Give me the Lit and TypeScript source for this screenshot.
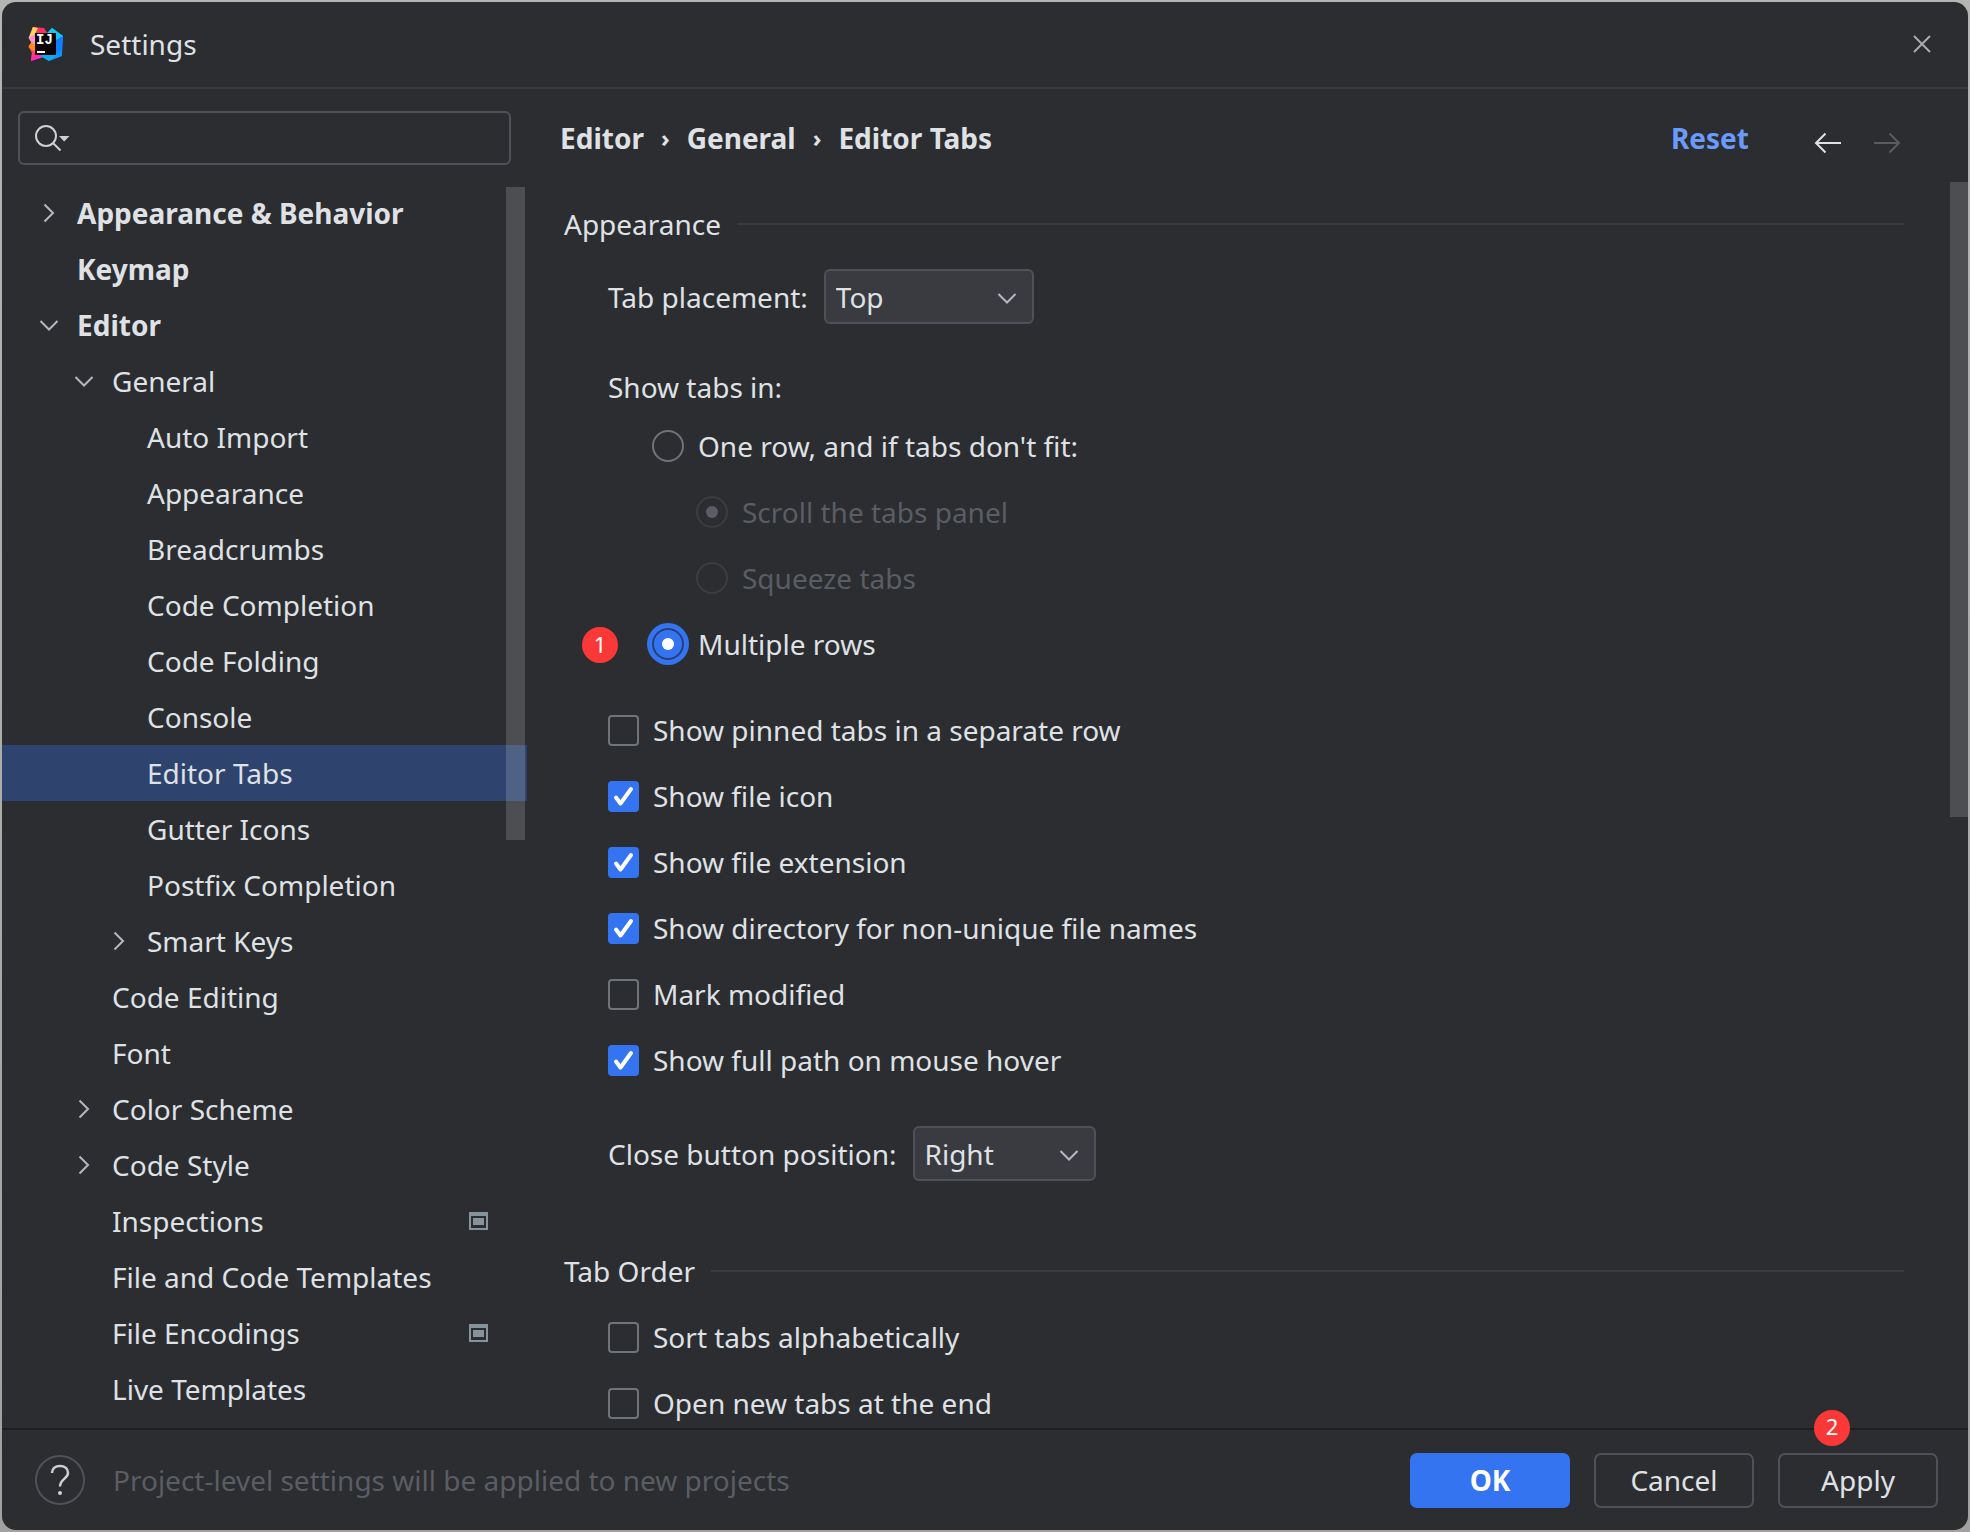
import { LitElement, html, css, svg, nothing } from "lit";
import { customElement, property, state } from "lit/decorators.js";
import { classMap } from "lit/directives/class-map.js";

interface TreeRow {
  label: string;
  depth: number;
  toggle?: "open" | "closed";
  bold?: boolean;
  projectLevel?: boolean;
}

const TREE: TreeRow[] = [
  { label: "Appearance & Behavior", depth: 0, toggle: "closed", bold: true },
  { label: "Keymap", depth: 0, bold: true },
  { label: "Editor", depth: 0, toggle: "open", bold: true },
  { label: "General", depth: 1, toggle: "open" },
  { label: "Auto Import", depth: 2 },
  { label: "Appearance", depth: 2 },
  { label: "Breadcrumbs", depth: 2 },
  { label: "Code Completion", depth: 2 },
  { label: "Code Folding", depth: 2 },
  { label: "Console", depth: 2 },
  { label: "Editor Tabs", depth: 2 },
  { label: "Gutter Icons", depth: 2 },
  { label: "Postfix Completion", depth: 2 },
  { label: "Smart Keys", depth: 2, toggle: "closed" },
  { label: "Code Editing", depth: 1 },
  { label: "Font", depth: 1 },
  { label: "Color Scheme", depth: 1, toggle: "closed" },
  { label: "Code Style", depth: 1, toggle: "closed" },
  { label: "Inspections", depth: 1, projectLevel: true },
  { label: "File and Code Templates", depth: 1 },
  { label: "File Encodings", depth: 1, projectLevel: true },
  { label: "Live Templates", depth: 1 },
];

const chevronRight = html`<svg class="chevron" viewBox="0 0 20 20" width="20" height="20" aria-hidden="true">
  <path d="M5.5 1.5 14 10 5.5 18.5" fill="none" stroke="currentColor" stroke-width="2" />
</svg>`;

const chevronDown = html`<svg class="chevron" viewBox="0 0 20 20" width="20" height="20" aria-hidden="true">
  <path d="M1.5 6 10 14.5 18.5 6" fill="none" stroke="currentColor" stroke-width="2" />
</svg>`;

const projectIcon = html`<svg class="project" viewBox="0 0 19 18" width="19" height="18" aria-label="Project level" role="img">
  <path fill="#87939a" fill-rule="evenodd" d="M0 0H19V18H0ZM2 4V16H17V4Z" />
  <rect x="4" y="6" width="11" height="7" fill="#87939a" />
</svg>`;

const base = css`
  *,
  *::before,
  *::after {
    box-sizing: border-box;
  }
  button,
  input,
  select {
    font: inherit;
    color: inherit;
    margin: 0;
  }
  svg {
    display: block;
    flex: none;
  }
`;

@customElement("app-logo")
export class AppLogo extends LitElement {
  static styles = css`
    :host {
      display: block;
    }
    svg {
      display: block;
    }
    text {
      font: bold 14px "Liberation Mono", monospace;
      fill: #fff;
    }
  `;

  render() {
    return html`<svg viewBox="0 0 36 36" width="36" height="36" role="img" aria-label="IntelliJ IDEA">
      <defs>
        <linearGradient id="warm" x1="0" y1="0" x2="0" y2="1">
          <stop offset="0" stop-color="#fdd35c" />
          <stop offset="0.35" stop-color="#ff8ec6" />
          <stop offset="0.55" stop-color="#ff9a1f" />
          <stop offset="0.8" stop-color="#ff2e6c" />
          <stop offset="1" stop-color="#f51fae" />
        </linearGradient>
        <linearGradient id="cool" x1="0" y1="0" x2="0" y2="1">
          <stop offset="0" stop-color="#12d3f5" />
          <stop offset="0.5" stop-color="#0f7bff" />
          <stop offset="1" stop-color="#12a4f4" />
        </linearGradient>
        <linearGradient id="core" x1="1" y1="0" x2="0" y2="1">
          <stop offset="0" stop-color="#000" />
          <stop offset="1" stop-color="#1a0207" />
        </linearGradient>
      </defs>
      ${svg`
        <path d="M5 1 0.5 12 3.5 16 0.5 21 4 26 3 35 14 30 20 18 12 6Z" fill="url(#warm)" />
        <path d="M5 1 16 2 20 8 7 9 3 6Z" fill="#ff315c" />
        <path d="M5 1 10 2 6 10 1 12Z" fill="#ffd45c" />
        <path d="M0.5 20 4 16 8 24 6 28Z" fill="#ff8a14" />
        <path d="M1 12 7 8 7 18 3 16Z" fill="#ff8fd2" />
        <path d="M2 23 8 26 8 30 3 35 4 27Z" fill="#ff3f6e" />
        <path d="M5 30 12 28 16 31 3 35Z" fill="#ff2bb4" />
        <path d="M24 2 35 10 34 30 21 35 12 30 20 18 19 8Z" fill="url(#cool)" />
        <path d="M24 2 35 10 29 14 18 8Z" fill="#16c5f7" />
        <path d="M28 14 35 10 34 20 28 28Z" fill="#0f7fff" />
        <path d="M12 29 29 28 21 35Z" fill="#10a9f2" />
      `}
      <rect x="7" y="7" width="21" height="22" fill="url(#core)" />
      <text x="8" y="18">IJ</text>
      <rect x="9" y="25" width="8" height="2" fill="#fff" />
    </svg>`;
  }
}

@customElement("settings-tree")
export class SettingsTree extends LitElement {
  @state() private selected = "Editor Tabs";

  static styles = [
    base,
    css`
      :host {
        display: block;
        position: relative;
        overflow: hidden;
      }
      .row {
        display: flex;
        align-items: center;
        height: 56px;
        padding-right: 39px;
        color: inherit;
        text-decoration: none;
        white-space: nowrap;
      }
      .row.selected {
        background: #2e436e;
      }
      .row.bold {
        font-weight: 700;
      }
      .indent-0 {
        padding-left: 37px;
      }
      .indent-1 {
        padding-left: 72px;
      }
      .indent-2 {
        padding-left: 107px;
      }
      .toggle {
        flex: none;
        width: 38px;
        color: #b4b8bf;
      }
      .label {
        flex: 1;
      }
      .thumb {
        position: absolute;
        top: 2px;
        right: 2px;
        width: 19px;
        height: 653px;
        background: rgba(255, 255, 255, 0.16);
      }
    `,
  ];

  private select(e: Event, label: string) {
    e.preventDefault();
    this.selected = label;
  }

  render() {
    return html`<nav aria-label="Settings categories">
        ${TREE.map(
          (r) => html`<a
            href="#"
            class=${classMap({
              row: true,
              [`indent-${r.depth}`]: true,
              bold: !!r.bold,
              selected: r.label === this.selected,
            })}
            @click=${(e: Event) => this.select(e, r.label)}
          >
            <span class="toggle"
              >${r.toggle === "open" ? chevronDown : r.toggle === "closed" ? chevronRight : nothing}</span
            >
            <span class="label">${r.label}</span>
            ${r.projectLevel ? projectIcon : nothing}
          </a>`
        )}
      </nav>
      <div class="thumb"></div>`;
  }
}

@customElement("choice-item")
export class ChoiceItem extends LitElement {
  @property() kind: "radio" | "checkbox" = "checkbox";
  @property() label = "";
  @property({ type: Boolean }) checked = false;
  @property({ type: Boolean }) disabled = false;
  @property({ type: Boolean }) focused = false;

  static styles = [
    base,
    css`
      :host {
        display: flex;
      }
      label {
        display: flex;
        align-items: center;
        gap: 14px;
        height: 42px;
        white-space: nowrap;
      }
      .off {
        color: #5a5d63;
      }
      .box {
        display: grid;
        place-items: center;
      }
      .box > * {
        grid-area: 1 / 1;
      }
      input {
        appearance: none;
        width: 31px;
        height: 31px;
        border: 2px solid #6f737a;
        border-radius: 4px;
        outline: none;
      }
      input[type="checkbox"]:checked {
        border-color: #3574f0;
        background: #3574f0;
      }
      .tick {
        pointer-events: none;
      }
      input[type="radio"] {
        display: grid;
        place-items: center;
        width: 32px;
        height: 32px;
        border-radius: 50%;
      }
      input[type="radio"]:checked::before {
        content: "";
        width: 12px;
        height: 12px;
        border-radius: 50%;
        background: #fff;
      }
      input[type="radio"]:checked {
        background: #3574f0;
        border-color: #25407a;
      }
      input[type="radio"].ring {
        box-shadow: 0 0 0 5px #3574f0;
      }
      input[type="radio"]:disabled {
        background: none;
        border-color: #3b3d41;
      }
      input[type="radio"]:disabled::before {
        background: #5a5d63;
      }
    `,
  ];

  private toggle(e: Event) {
    this.checked = (e.target as HTMLInputElement).checked;
  }

  render() {
    return html`<label class=${classMap({ off: this.disabled })}>
      <span class="box">
        <input
          type=${this.kind}
          class=${classMap({ ring: this.focused })}
          .checked=${this.checked}
          ?disabled=${this.disabled}
          @change=${this.toggle}
        />
        ${this.kind === "checkbox" && this.checked
          ? html`<svg class="tick" viewBox="0 0 31 31" width="31" height="31" aria-hidden="true">
              <path
                d="M8 16.5 12.5 22.5 23 8"
                fill="none"
                stroke="#fff"
                stroke-width="4"
                stroke-linecap="round"
                stroke-linejoin="round"
              />
            </svg>`
          : nothing}
      </span>
      ${this.label}
    </label>`;
  }
}

@customElement("combo-field")
export class ComboField extends LitElement {
  @property() label = "";
  @property({ attribute: false }) options: string[] = [];
  @property() size: "wide" | "narrow" = "wide";

  static styles = [
    base,
    css`
      :host {
        display: flex;
        align-items: center;
        gap: 16px;
        white-space: nowrap;
      }
      .combo {
        display: grid;
        align-items: center;
      }
      .combo > * {
        grid-area: 1 / 1;
      }
      select {
        appearance: none;
        height: 55px;
        padding: 0 10px;
        border: 2px solid #4e5157;
        border-radius: 6px;
        background: #393b40;
        outline: none;
      }
      .wide {
        width: 210px;
      }
      .narrow {
        width: 183px;
      }
      .chevron {
        justify-self: end;
        margin: 2px 17px 0 0;
        color: #b4b8bf;
        pointer-events: none;
      }
    `,
  ];

  render() {
    return html`<label for="field">${this.label}</label>
      <span class="combo">
        <select id="field" class=${this.size}>
          ${this.options.map((o) => html`<option>${o}</option>`)}
        </select>
        ${chevronDown}
      </span>`;
  }
}

@customElement("app-root")
export class AppRoot extends LitElement {
  static styles = [
    base,
    css`
      :host {
        display: block;
        height: 100vh;
        padding: 2px;
        background: linear-gradient(#b4b6b4, #a3a19f);
        color: #dfe1e5;
        font: 28px/42px "Noto Sans", "Open Sans", sans-serif;
        box-sizing: border-box;
      }
      .window {
        display: flex;
        flex-direction: column;
        height: 100%;
        border-radius: 14px;
        background: #2b2d30;
        overflow: hidden;
      }
      .titlebar {
        display: flex;
        align-items: center;
        gap: 26px;
        flex: none;
        height: 87px;
        padding: 0 31px 2px 26px;
        border-bottom: 2px solid #393b40;
      }
      h1,
      h2 {
        margin: 0;
        font: inherit;
      }
      .titlebar h1 {
        flex: 1;
      }
      .icon-button {
        display: grid;
        place-items: center;
        width: 30px;
        height: 30px;
        padding: 0;
        border: 0;
        background: none;
      }
      .main {
        display: flex;
        flex: 1;
        min-height: 0;
      }
      .sidebar {
        display: flex;
        flex-direction: column;
        flex: none;
        width: 525px;
        gap: 20px;
        padding-top: 22px;
      }
      .search {
        display: flex;
        align-items: center;
        flex: none;
        height: 54px;
        margin: 0 16px;
        padding: 0 14px;
        border: 2px solid #4e5157;
        border-radius: 6px;
      }
      .search input {
        flex: 1;
        min-width: 0;
        height: 42px;
        border: 0;
        background: none;
        outline: none;
      }
      settings-tree {
        flex: 1;
        min-height: 0;
      }
      .content {
        display: flex;
        flex-direction: column;
        flex: 1;
        min-width: 0;
      }
      .heading {
        display: flex;
        align-items: center;
        flex: none;
        padding: 28px 66px 23px 33px;
        font-weight: 700;
        white-space: nowrap;
      }
      .crumbs {
        display: flex;
        flex: 1;
        gap: 17px;
      }
      .separator {
        font-size: 24px;
      }
      .reset {
        color: #6b9bfa;
        text-decoration: none;
        margin-right: 64px;
      }
      .arrows {
        display: flex;
        gap: 29px;
        padding-top: 10px;
      }
      .page {
        position: relative;
        flex: 1;
        min-height: 0;
        padding: 21px 64px 0 37px;
        overflow: hidden;
      }
      .page-thumb {
        position: absolute;
        top: 0;
        right: 0;
        width: 18px;
        height: 635px;
        background: #4d4e51;
      }
      .section {
        display: flex;
        align-items: center;
        gap: 16px;
        white-space: nowrap;
      }
      .section::after {
        content: "";
        flex: 1;
        height: 2px;
        background: #393b40;
      }
      .body {
        padding: 24px 0 69px 44px;
      }
      .caption {
        margin-top: 42px;
      }
      .stack {
        display: flex;
        flex-direction: column;
        gap: 24px;
      }
      .radios {
        padding: 17px 0 44px 44px;
      }
      .nested {
        padding-left: 44px;
      }
      .marked {
        position: relative;
      }
      .badge {
        position: absolute;
        display: grid;
        place-items: center;
        width: 36px;
        height: 36px;
        padding-bottom: 3px;
        border-radius: 50%;
        background: #fb3838;
        color: #fff;
        font-size: 22px;
        line-height: 30px;
      }
      .badge-one {
        left: -70px;
        top: 4px;
      }
      .badge-two {
        left: 36px;
        top: -43px;
      }
      combo-field.close {
        margin-top: 45px;
      }
      .footer {
        display: flex;
        align-items: center;
        flex: none;
        height: 102px;
        padding: 0 30px 0 33px;
        gap: 24px;
        border-top: 2px solid #1e1f22;
      }
      .help {
        display: grid;
        place-items: center;
        width: 50px;
        height: 50px;
        padding: 0;
        border: 2px solid #4e5157;
        border-radius: 50%;
        background: none;
      }
      .note {
        flex: 1;
        margin-left: 4px;
        color: #5a5d63;
        white-space: nowrap;
      }
      .button {
        display: block;
        width: 160px;
        height: 55px;
        padding: 0;
        border: 2px solid #4e5157;
        border-radius: 7px;
        background: none;
      }
      .primary {
        border-color: #3574f0;
        background: #3574f0;
        color: #fff;
        font-weight: 700;
      }
    `,
  ];

  render() {
    return html`<div class="window">
      <header class="titlebar">
        <app-logo></app-logo>
        <h1>Settings</h1>
        <button class="icon-button" aria-label="Close">
          <svg viewBox="0 0 18 18" width="18" height="18">
            <path d="M1 1 17 17M17 1 1 17" fill="none" stroke="#a9abae" stroke-width="2" />
          </svg>
        </button>
      </header>
      <div class="main">
        <aside class="sidebar">
          <div class="search">
            <svg viewBox="0 0 36 28" width="36" height="28" aria-hidden="true">
              <circle cx="12" cy="12" r="10" fill="none" stroke="#ced0d6" stroke-width="2" />
              <path d="M19 19 26.5 26.5" stroke="#ced0d6" stroke-width="2" />
              <path d="M25 12H35.500L30.200 17.500Z" fill="#ced0d6" />
            </svg>
            <input type="text" aria-label="Search settings" />
          </div>
          <settings-tree></settings-tree>
        </aside>
        <main class="content">
          <div class="heading">
            <div class="crumbs">
              <span>Editor</span><span class="separator">›</span><span>General</span
              ><span class="separator">›</span><span>Editor Tabs</span>
            </div>
            <a class="reset" href="#">Reset</a>
            <div class="arrows">
              <button class="icon-button" aria-label="Back">
                <svg viewBox="0 0 28 22" width="28" height="22">
                  <path d="M27 11H2M11.500 1.500 2 11l9.500 9.500" fill="none" stroke="#dfe1e5" stroke-width="2" />
                </svg>
              </button>
              <button class="icon-button" aria-label="Forward" disabled>
                <svg viewBox="0 0 28 22" width="28" height="22">
                  <path d="M1 11H26M16.500 1.500 26 11l-9.500 9.500" fill="none" stroke="#5a5c5f" stroke-width="2" />
                </svg>
              </button>
            </div>
          </div>
          <div class="page">
            <h2 class="section">Appearance</h2>
            <div class="body">
              <combo-field label="Tab placement:" .options=${["Top", "Bottom", "Left", "Right", "None"]}></combo-field>
              <div class="caption">Show tabs in:</div>
              <div class="stack radios">
                <choice-item kind="radio" label="One row, and if tabs don't fit:"></choice-item>
                <choice-item class="nested" kind="radio" label="Scroll the tabs panel" checked disabled></choice-item>
                <choice-item class="nested" kind="radio" label="Squeeze tabs" disabled></choice-item>
                <div class="marked">
                  <choice-item kind="radio" label="Multiple rows" checked focused></choice-item>
                  <span class="badge badge-one">1</span>
                </div>
              </div>
              <div class="stack">
                <choice-item label="Show pinned tabs in a separate row"></choice-item>
                <choice-item label="Show file icon" checked></choice-item>
                <choice-item label="Show file extension" checked></choice-item>
                <choice-item label="Show directory for non-unique file names" checked></choice-item>
                <choice-item label="Mark modified"></choice-item>
                <choice-item label="Show full path on mouse hover" checked></choice-item>
              </div>
              <combo-field
                class="close"
                size="narrow"
                label="Close button position:"
                .options=${["Right", "Left", "None"]}
              ></combo-field>
            </div>
            <h2 class="section">Tab Order</h2>
            <div class="body">
              <div class="stack">
                <choice-item label="Sort tabs alphabetically"></choice-item>
                <choice-item label="Open new tabs at the end"></choice-item>
              </div>
            </div>
            <div class="page-thumb"></div>
          </div>
        </main>
      </div>
      <footer class="footer">
        <button class="help" aria-label="Help">
          <svg viewBox="0 0 20 32" width="20" height="32">
            <path
              d="M2 9C2 4.500 5.500 2 10 2S18 4.500 18 9C18 14.500 10 15 10 22.500"
              fill="none"
              stroke="#ced0d6"
              stroke-width="2.500"
            />
            <circle cx="10" cy="29" r="2" fill="#ced0d6" />
          </svg>
        </button>
        <span class="note">Project-level settings will be applied to new projects</span>
        <button class="button primary">OK</button>
        <button class="button">Cancel</button>
        <div class="marked">
          <button class="button">Apply</button>
          <span class="badge badge-two">2</span>
        </div>
      </footer>
    </div>`;
  }
}
